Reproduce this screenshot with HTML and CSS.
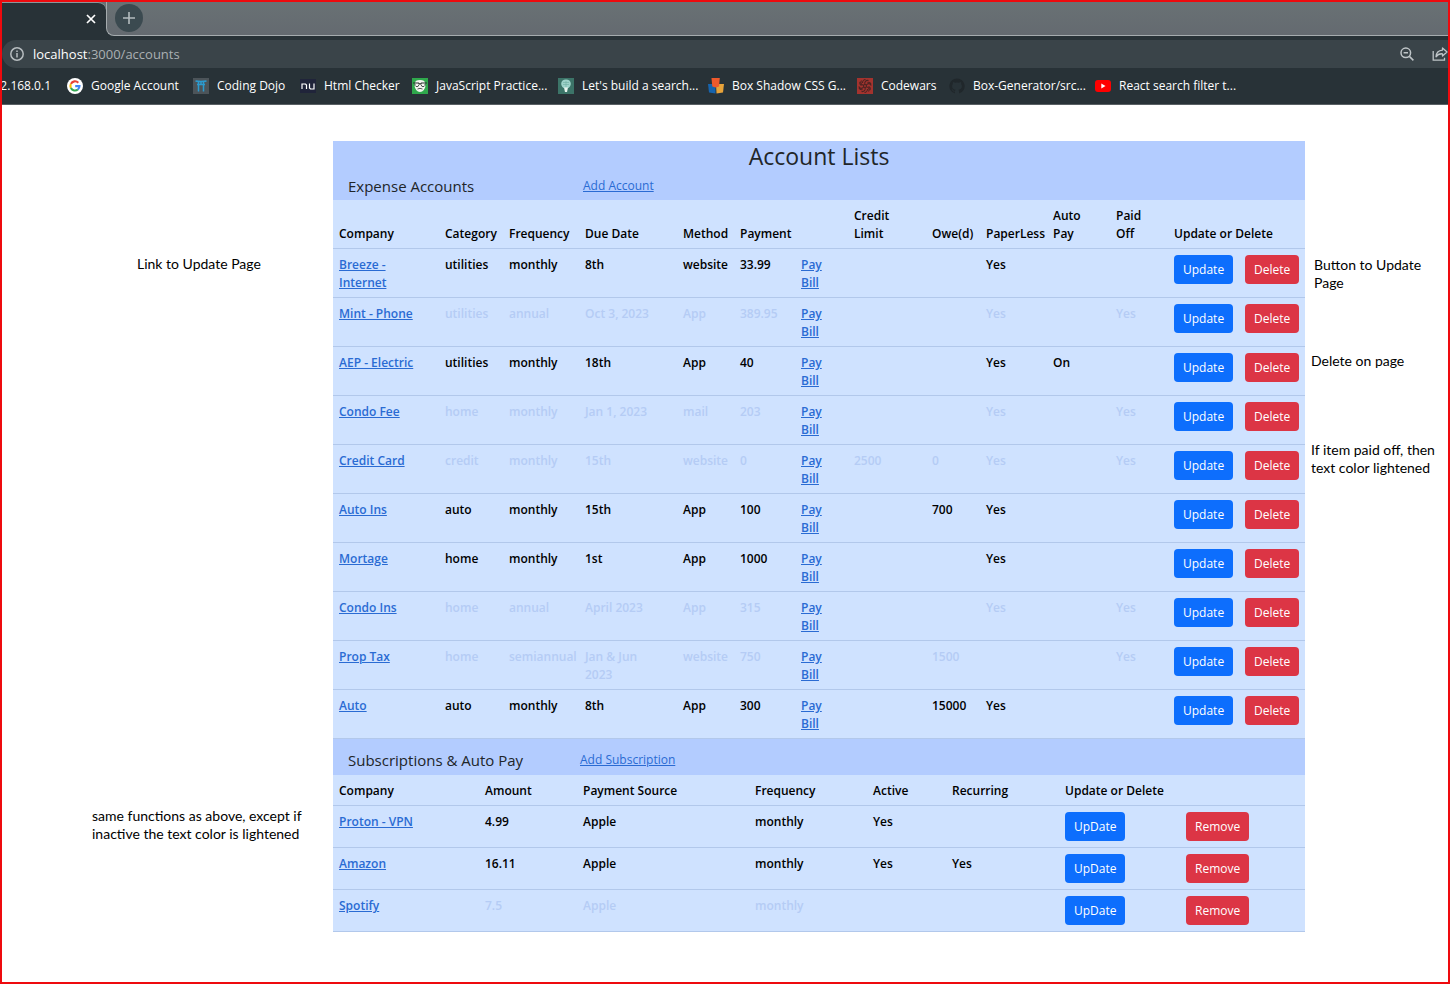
FILE: index.html
```html
<!DOCTYPE html>
<html lang="en">
<head>
<meta charset="utf-8">
<title>Account Lists</title>
<link rel="stylesheet" href="styles.css">
</head>
<body>
<header class="browser">
  <div class="tabstrip">
    <div class="tab"><button class="icon-btn" aria-label="Close tab"><svg width="10" height="10" viewBox="0 0 10 10"><path d="M1 1l8 8M9 1l-8 8" stroke="#fff" stroke-width="1.7"/></svg></button></div>
    <div class="strip-rest"><button class="icon-btn new-tab" aria-label="New tab"><svg width="12" height="12" viewBox="0 0 12 12"><path d="M6 0v12M0 6h12" stroke="#b4bcbf" stroke-width="1.6"/></svg></button></div>
  </div>
  <div class="address">
    <svg width="14" height="14" viewBox="0 0 14 14" fill="none" stroke="#b7bdc0" stroke-width="1.5"><circle cx="7" cy="7" r="6.2"/><path d="M7 6v4.4M7 3.4v1.6"/></svg>
    <span class="url"><span class="host">localhost</span>:3000/accounts</span>
    <button class="icon-btn" aria-label="Zoom out"><svg width="14" height="14" viewBox="0 0 14 14" fill="none" stroke="#bfc5c8" stroke-width="1.5"><circle cx="5.8" cy="5.8" r="4.8"/><path d="M9.4 9.4l4 4M3.6 5.8H8"/></svg></button>
    <button class="icon-btn" aria-label="Share"><svg width="16" height="14" viewBox="0 0 16 14" fill="none" stroke="#bfc5c8" stroke-width="1.3"><path d="M1.2 4v9.2h11.3v-2.4"/><path d="M10.500 1l4.500 4-4.500 4V6.800C7.500 6.500 5.500 7.600 4 9.800c.2-3.800 2.500-6.400 6.500-6.700z" stroke-linejoin="round"/></svg></button>
  </div>
  <nav class="bookmarks">
    <a href="#" class="clipped">02.168.0.1</a>
    <a href="#"><svg viewBox="0 0 16 16"><circle cx="8" cy="8" r="8" fill="#fff"/><g fill="none" stroke-width="2.100"><path d="M11.300 4.700A4.600 4.600 0 0 0 3.900 5.900" stroke="#ea4335"/><path d="M3.900 5.900a4.600 4.600 0 0 0 0 4.200" stroke="#fbbc05"/><path d="M3.900 10.100a4.600 4.600 0 0 0 7 1.400" stroke="#34a853"/><path d="M10.900 11.500A4.500 4.500 0 0 0 12.500 8.100H8.200" stroke="#4285f4"/></g></svg>Google Account</a>
    <a href="#"><svg viewBox="0 0 16 16"><path fill="#4c5459" d="M0 0h16v16H0z"/><path d="M2.500 3q5.500 1 11 0M4 6.500h8M5.500 4v9.500M10.500 4v9.500M8 4v2.500" stroke="#2b9bd0" stroke-width="1.500" fill="none"/></svg>Coding Dojo</a>
    <a href="#"><svg viewBox="0 0 16 16"><path fill="#20243a" d="M0 1h16v14H0z"/><path d="M2 11V6h3.500l1 1v4M9.500 5.500V10l1 1H14V5.500" fill="none" stroke="#fff" stroke-width="1.200"/></svg>Html Checker</a>
    <a href="#"><svg viewBox="0 0 16 16"><path fill="#2fa84c" d="M0 0h16v16H0z"/><path d="M3 5Q3 2 8 2t5 3l.5 3q-1 5.500-5.500 6-4.500-.5-5.500-6z" fill="#f3f5f0"/><path d="M1 5h5.500l1 1h1l1-1H15" fill="none" stroke="#26322d" stroke-width="1.200"/><path d="M3 6v1.500l1 1h2l1-2M9 6.500l1 2h2l1-1V6M5.500 11q2.500-1.300 5 0" fill="none" stroke="#26322d" stroke-width=".8"/></svg>JavaScript Practice...</a>
    <a href="#"><svg viewBox="0 0 16 16"><path fill="#3c7468" d="M0 0h16v16H0z"/><path d="M8 1.500c-6 0-5.800 6.500-2.500 8.500h5c3.300-2 3.500-8.500-2.500-8.500z" fill="#9fd3ca"/><path d="M6 9.500h4L9 14H7z" fill="#eaf5f0"/><path d="M5 4.500h6M5 6.500h6M8 3v6" stroke="#75b3a8" stroke-width=".7"/></svg>Let's build a search...</a>
    <a href="#"><svg viewBox="0 0 16 16"><path fill="#1764ad" d="M0 6h7.500v9.500L1 14.500z"/><path fill="#e8a33a" d="M8 6h8l-1 8.500-6.500 1z"/><path fill="#ef5a2c" d="M3.500 0h8.300L11 8.500l-3.300 1-3.400-1z"/></svg>Box Shadow CSS G...</a>
    <a href="#"><svg viewBox="0 0 16 16"><path fill="#a3332e" d="M0 0h16v16H0z"/><g fill="none" stroke="#4a2422" stroke-width="1.100"><circle cx="8" cy="8" r="1.500"/><path d="M8 6.500C7 4 9 2 11.500 2.500M9.300 7.300C10.500 5 13.500 5 14.200 7.500M9.300 8.700C12 9 13 11.500 11.500 13.500M8 9.500C9 12 7 14 4.500 13.500M6.700 8.700C5.500 11 2.500 11 1.800 8.500M6.700 7.300C4 7 3 4.500 4.500 2.500"/><path d="M5.500 5C5.500 3 7 1.500 8.500 1.500M10.500 4.500C12 4 13.500 5 14 6M11.500 8.500C13 9 13.500 10.500 13 12M10.500 11C10.500 13 9 14.500 7.500 14.500M5.500 11.500C4 12 2.500 11 2 10M4.500 7.500C3 7 2.500 5.500 3 4"/></g></svg>Codewars</a>
    <a href="#"><svg viewBox="0 0 16 16"><path fill="#20272b" d="M8 .5a7.600 7.600 0 0 0-2.500 14.800c.4.100.5-.2.500-.4v-1.500c-2 .5-2.600-.8-2.700-1.200-.2-.4-.5-.8-.9-1.100 1.200-.3 1.800 1.200 2.100 1.500.5.500 1.100.4 1.600.2.100-.5.300-.8.500-1-1.900-.3-3.500-1-3.500-3.800 0-.8.300-1.500.8-2.100-.2-.7-.1-1.400.1-2 .6 0 1.300.3 2 .8a8 8 0 0 1 4 0c.7-.5 1.400-.8 2-.8.300.6.300 1.300.1 2 .5.6.8 1.300.8 2.100 0 2.800-1.600 3.500-3.500 3.800.4.400.6.900.6 1.500v1.700c0 .2.200.4.500.3A7.600 7.600 0 0 0 8 .5z"/></svg>Box-Generator/src...</a>
    <a href="#"><svg viewBox="0 0 16 16"><rect y="2" width="16" height="12" rx="3" fill="#f00"/><path fill="#fff" d="M6.300 5.500v5l4.200-2.500z"/></svg>React search filter t...</a>
  </nav>
</header>

<div class="page">
  <aside class="notes notes-left">
    <p class="note-company">Link to Update Page</p>
    <p class="note-subs">same functions as above, except if<br>inactive the text color is lightened</p>
  </aside>

  <main class="lists">
    <section>
      <h1>Account Lists</h1>
      <div class="section-head"><h2>Expense Accounts</h2><a href="#">Add Account</a></div>
      <table>
        <colgroup><col class="w106"><col class="w64"><col class="w76"><col class="w98"><col class="w57"><col class="w61"><col class="w53"><col class="w78"><col class="w54"><col class="w67"><col class="w63"><col class="w58"><col class="w71"><col class="w66"></colgroup>
        <thead><tr><th>Company</th><th>Category</th><th>Frequency</th><th>Due Date</th><th>Method</th><th>Payment</th><th></th><th>Credit<br>Limit</th><th>Owe(d)</th><th>PaperLess</th><th>Auto<br>Pay</th><th>Paid<br>Off</th><th colspan="2">Update or Delete</th></tr></thead>
        <tbody>
          <tr><td><a href="#">Breeze -<br>Internet</a></td><td>utilities</td><td>monthly</td><td>8th</td><td>website</td><td>33.99</td><td><a href="#">Pay<br>Bill</a></td><td></td><td></td><td>Yes</td><td></td><td></td><td class="action"><button class="btn update">Update</button></td><td class="action"><button class="btn delete">Delete</button></td></tr>
          <tr class="muted"><td><a href="#">Mint - Phone</a></td><td>utilities</td><td>annual</td><td>Oct 3, 2023</td><td>App</td><td>389.95</td><td><a href="#">Pay<br>Bill</a></td><td></td><td></td><td>Yes</td><td></td><td>Yes</td><td class="action"><button class="btn update">Update</button></td><td class="action"><button class="btn delete">Delete</button></td></tr>
          <tr><td><a href="#">AEP - Electric</a></td><td>utilities</td><td>monthly</td><td>18th</td><td>App</td><td>40</td><td><a href="#">Pay<br>Bill</a></td><td></td><td></td><td>Yes</td><td>On</td><td></td><td class="action"><button class="btn update">Update</button></td><td class="action"><button class="btn delete">Delete</button></td></tr>
          <tr class="muted"><td><a href="#">Condo Fee</a></td><td>home</td><td>monthly</td><td>Jan 1, 2023</td><td>mail</td><td>203</td><td><a href="#">Pay<br>Bill</a></td><td></td><td></td><td>Yes</td><td></td><td>Yes</td><td class="action"><button class="btn update">Update</button></td><td class="action"><button class="btn delete">Delete</button></td></tr>
          <tr class="muted"><td><a href="#">Credit Card</a></td><td>credit</td><td>monthly</td><td>15th</td><td>website</td><td>0</td><td><a href="#">Pay<br>Bill</a></td><td>2500</td><td>0</td><td>Yes</td><td></td><td>Yes</td><td class="action"><button class="btn update">Update</button></td><td class="action"><button class="btn delete">Delete</button></td></tr>
          <tr><td><a href="#">Auto Ins</a></td><td>auto</td><td>monthly</td><td>15th</td><td>App</td><td>100</td><td><a href="#">Pay<br>Bill</a></td><td></td><td>700</td><td>Yes</td><td></td><td></td><td class="action"><button class="btn update">Update</button></td><td class="action"><button class="btn delete">Delete</button></td></tr>
          <tr><td><a href="#">Mortage</a></td><td>home</td><td>monthly</td><td>1st</td><td>App</td><td>1000</td><td><a href="#">Pay<br>Bill</a></td><td></td><td></td><td>Yes</td><td></td><td></td><td class="action"><button class="btn update">Update</button></td><td class="action"><button class="btn delete">Delete</button></td></tr>
          <tr class="muted"><td><a href="#">Condo Ins</a></td><td>home</td><td>annual</td><td>April 2023</td><td>App</td><td>315</td><td><a href="#">Pay<br>Bill</a></td><td></td><td></td><td>Yes</td><td></td><td>Yes</td><td class="action"><button class="btn update">Update</button></td><td class="action"><button class="btn delete">Delete</button></td></tr>
          <tr class="muted"><td><a href="#">Prop Tax</a></td><td>home</td><td>semiannual</td><td>Jan &amp; Jun<br>2023</td><td>website</td><td>750</td><td><a href="#">Pay<br>Bill</a></td><td></td><td>1500</td><td></td><td></td><td>Yes</td><td class="action"><button class="btn update">Update</button></td><td class="action"><button class="btn delete">Delete</button></td></tr>
          <tr><td><a href="#">Auto</a></td><td>auto</td><td>monthly</td><td>8th</td><td>App</td><td>300</td><td><a href="#">Pay<br>Bill</a></td><td></td><td>15000</td><td>Yes</td><td></td><td></td><td class="action"><button class="btn update">Update</button></td><td class="action"><button class="btn delete">Delete</button></td></tr>
        </tbody>
      </table>
    </section>
    <section>
      <div class="section-head subs"><h2>Subscriptions &amp; Auto Pay</h2><a href="#">Add Subscription</a></div>
      <table>
        <colgroup><col class="w146"><col class="w98"><col class="w172"><col class="w118"><col class="w79"><col class="w113"><col class="w121"><col class="w125"></colgroup>
        <thead><tr><th>Company</th><th>Amount</th><th>Payment Source</th><th>Frequency</th><th>Active</th><th>Recurring</th><th colspan="2">Update or Delete</th></tr></thead>
        <tbody>
          <tr><td><a href="#">Proton - VPN</a></td><td>4.99</td><td>Apple</td><td>monthly</td><td>Yes</td><td></td><td class="action"><button class="btn update">UpDate</button></td><td class="action"><button class="btn delete">Remove</button></td></tr>
          <tr><td><a href="#">Amazon</a></td><td>16.11</td><td>Apple</td><td>monthly</td><td>Yes</td><td>Yes</td><td class="action"><button class="btn update">UpDate</button></td><td class="action"><button class="btn delete">Remove</button></td></tr>
          <tr class="muted"><td><a href="#">Spotify</a></td><td>7.5</td><td>Apple</td><td>monthly</td><td></td><td></td><td class="action"><button class="btn update">UpDate</button></td><td class="action"><button class="btn delete">Remove</button></td></tr>
        </tbody>
      </table>
    </section>
  </main>

  <aside class="notes notes-right">
    <p class="note-update">Button to Update<br>Page</p>
    <p class="note-delete">Delete on page</p>
    <p class="note-paid">If item paid off, then<br>text color lightened</p>
  </aside>
</div>
</body>
</html>
```

FILE: styles.css
```css
* { box-sizing: border-box; }

body {
  margin: 0;
  min-height: 100vh;
  border: 2px solid #ee0a0e;
  background: #fff;
  color: #000;
  font: 12px/18px "Open Sans", "Noto Sans", sans-serif;
}

h1, h2, p { margin: 0; }

.icon-btn {
  display: flex;
  align-items: center;
  justify-content: center;
  padding: 0;
  border: 0;
  background: none;
}

/* Browser chrome */
.browser {
  background: #283237;
  color: #fff;
  border-bottom: 1px solid #596064;
  overflow: hidden;
}

.tabstrip {
  display: flex;
  height: 34px;
  background: linear-gradient(to right, #697174 50%, #283237 50%) 0 0 / 210px 10px no-repeat #283237;
}

.tab {
  width: 104px;
  display: flex;
  align-items: center;
  justify-content: flex-end;
  padding: 0 10px 2px 0;
  border-top: 1px solid #8d9599;
  border-top-right-radius: 8px;
  background: #283237;
}

.strip-rest {
  flex: 1;
  display: flex;
  align-items: center;
  padding: 0 0 1px 8px;
  border-left: 1px solid #a5abae;
  border-bottom: 1px solid #a5abae;
  border-bottom-left-radius: 8px;
  background: linear-gradient(#697174, #646a70);
}

.new-tab {
  width: 28px;
  height: 28px;
  border-radius: 50%;
  background: #3b4a50;
}

.address {
  display: flex;
  align-items: center;
  height: 28px;
  margin-top: 4px;
  padding-left: 8px;
  border-radius: 14px 0 0 14px;
  background: #3a4449;
  overflow: hidden;
}

.address .icon-btn { margin-right: 18px; }
.address .icon-btn:last-child { margin-right: 0; }
.address svg { flex: none; }

.url {
  flex: 1;
  padding-left: 9px;
  color: #aab0b3;
  font-size: 13px;
}

.host { color: #fff; }

.bookmarks {
  display: grid;
  grid-template-columns: 65px 126px 107px 112px 146px 150px 149px 92px 146px 1fr;
  align-items: center;
  height: 36px;
}

.bookmarks a {
  display: flex;
  align-items: center;
  gap: 8px;
  color: #fff;
  text-decoration: none;
  white-space: nowrap;
}

.bookmarks svg { width: 16px; height: 16px; flex: none; }

.bookmarks .clipped {
  justify-content: flex-end;
  padding-right: 16px;
}

/* Page */
.page {
  display: grid;
  grid-template-columns: 331fr 972fr 143fr;
  padding: 36px 0 48px;
}

.lists { min-width: 0; }

h1 {
  padding-bottom: 2px;
  background: #b3ccff;
  color: #212529;
  font-size: 23px;
  line-height: 30px;
  font-weight: 500;
  text-align: center;
}

.section-head {
  display: grid;
  grid-template-columns: 235px 1fr;
  align-items: center;
  height: 27px;
  padding: 0 0 2px 15px;
  background: #b3ccff;
}

.section-head.subs {
  grid-template-columns: 232px 1fr;
  height: 36px;
  padding-top: 8px;
}

h2 {
  color: #212529;
  font-size: 15px;
  line-height: 18px;
  font-weight: 500;
}

.lists a { color: #2a6bd3; }

table {
  width: 100%;
  table-layout: fixed;
  border-collapse: separate;
  border-spacing: 0;
  background: #cfe2ff;
}

th, td {
  padding: 7px 0 5px 6px;
  border-bottom: 1px solid #b2c8eb;
  font-weight: 600;
  text-align: left;
  vertical-align: top;
  white-space: nowrap;
}

th { vertical-align: bottom; }

.action { padding: 6px 0 6px 6px; }

.muted td { color: #b5ccf5; }

.w53 { width: 53px; }
.w54 { width: 54px; }
.w57 { width: 57px; }
.w58 { width: 58px; }
.w61 { width: 61px; }
.w63 { width: 63px; }
.w64 { width: 64px; }
.w66 { width: 66px; }
.w67 { width: 67px; }
.w71 { width: 71px; }
.w76 { width: 76px; }
.w78 { width: 78px; }
.w79 { width: 79px; }
.w98 { width: 98px; }
.w106 { width: 106px; }
.w113 { width: 113px; }
.w118 { width: 118px; }
.w121 { width: 121px; }
.w125 { width: 125px; }
.w146 { width: 146px; }
.w172 { width: 172px; }

.btn {
  display: block;
  height: 29px;
  padding: 0 9px;
  border: 0;
  border-radius: 4px;
  color: #fff;
  font: inherit;
  font-weight: 400;
}

.update { background: #0d6efd; }
.delete { background: #dc3545; }

/* Margin notes */
.notes {
  display: flex;
  flex-direction: column;
  font: 14px/18px Lato, sans-serif;
  white-space: nowrap;
}

.notes-left { padding: 114px 0 0 90px; }
.note-company { padding-left: 45px; }
.note-subs { margin-top: 534px; }

.notes-right { padding: 115px 0 0 6px; }
.note-update { padding-left: 3px; }
.note-delete { margin-top: 60px; }
.note-paid { margin-top: 71px; }
```
